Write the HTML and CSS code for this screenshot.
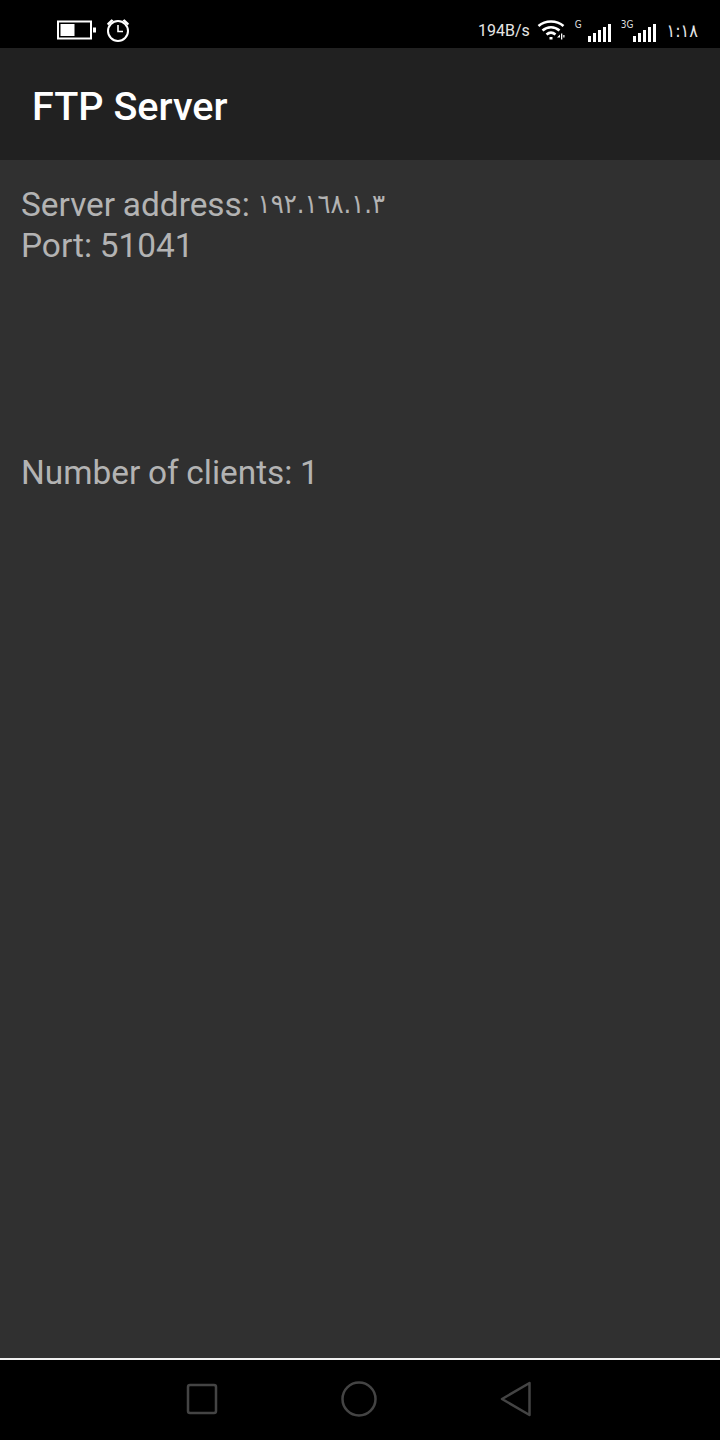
FILE: index.html
```html
<!DOCTYPE html>
<html lang="en">
  <head>
    <meta charset="UTF-8" />
    <meta name="viewport" content="width=device-width, initial-scale=1.0" />
    <title>FTP Server</title>
    <link rel="stylesheet" href="styles.css">
  </head>
  <body>
    <div class="screen">
      <div class="status-bar">
        <div class="status-left">
          <svg class="battery" width="40" height="20" viewBox="0 0 40 20">
            <rect x="1" y="1.5" width="33" height="17" fill="none" stroke="#fff" stroke-width="2" />
            <rect x="3.5" y="4" width="14" height="12" fill="#fff" />
            <rect x="36" y="7.5" width="3" height="5" fill="#fff" />
          </svg>
          <svg class="alarm" width="26" height="26" viewBox="0 0 26 26">
            <circle cx="13" cy="14" r="10" fill="none" stroke="#fff" stroke-width="2" />
            <path d="M13 8v6.5h5" fill="none" stroke="#fff" stroke-width="1.6" />
            <path d="M2 6.5L6.5 2.2L8.5 3.4L3.2 8.4Z M24 6.5L19.5 2.2L17.5 3.4L22.8 8.4Z" fill="#fff" />
          </svg>
        </div>
        <div class="status-right">
          <span class="speed">194B/s</span>
          <svg class="wifi" width="28" height="20" viewBox="0 0 28 20">
            <path d="M1.5 6C8.5 0 19.5 0 26.5 6" fill="none" stroke="#fff" stroke-width="2.6" />
            <path d="M5.5 10.5C10.5 6.2 17.5 6.2 22.5 10.5" fill="none" stroke="#fff" stroke-width="2.6" />
            <path d="M9.5 14.5C12.5 12 15.5 12 18.5 14.5" fill="none" stroke="#fff" stroke-width="2.6" />
            <rect x="12.5" y="17" width="3" height="2.5" fill="#fff" />
            <path d="M20 17.5L23 14.5V17.5Z M24 13.5h1.3v6H24Z M26.3 15h1.2v2.5h-1.2Z" fill="#fff" />
          </svg>
          <span class="net-label net-g">G</span>
          <svg class="signal" width="23" height="18" viewBox="0 0 23 18">
            <rect x="0" y="12" width="3" height="6" fill="#fff" />
            <rect x="5" y="9" width="3" height="9" fill="#fff" />
            <rect x="10" y="6" width="3" height="12" fill="#fff" />
            <rect x="15" y="3" width="3" height="15" fill="#fff" />
            <rect x="20" y="0" width="3" height="18" fill="#fff" />
          </svg>
          <span class="net-label net-3g">3G</span>
          <svg class="signal" width="23" height="18" viewBox="0 0 23 18">
            <rect x="0" y="12" width="3" height="6" fill="#fff" />
            <rect x="5" y="9" width="3" height="9" fill="#fff" />
            <rect x="10" y="6" width="3" height="12" fill="#fff" />
            <rect x="15" y="3" width="3" height="15" fill="#fff" />
            <rect x="20" y="0" width="3" height="18" fill="#fff" />
          </svg>
          <span class="time">١:١٨</span>
        </div>
      </div>

      <div class="app-bar">FTP Server</div>

      <div class="content">
        <div class="info-line">Server address: <span class="ip">١٩٢.١٦٨.١.٣</span></div>
        <div class="info-line">Port: 51041</div>
        <div class="info-line clients">Number of clients: 1</div>
      </div>

      <div class="nav-bar">
        <svg width="32" height="32" viewBox="0 0 32 32">
          <rect x="2" y="2" width="28" height="28" rx="2" fill="none" stroke="#444" stroke-width="2.5" />
        </svg>
        <svg width="36" height="36" viewBox="0 0 36 36">
          <circle cx="18" cy="18" r="16.5" fill="none" stroke="#444" stroke-width="2.5" />
        </svg>
        <svg width="32" height="36" viewBox="0 0 32 36">
          <path d="M29.5 2V34L2 18Z" fill="none" stroke="#444" stroke-width="2.5" stroke-linejoin="round" />
        </svg>
      </div>
    </div>
  </body>
</html>
```

FILE: styles.css
```css
body {
  margin: 0;
  background-color: #303030;
  font-family: Roboto, sans-serif;
}

.screen {
  width: 720px;
  height: 1440px;
  display: flex;
  flex-direction: column;
  overflow: hidden;
}

.status-bar {
  height: 48px;
  flex: none;
  background-color: #000;
  color: #fff;
  display: flex;
  align-items: center;
  justify-content: space-between;
  padding: 12px 22px 0 57px;
  box-sizing: border-box;
}

.status-left {
  display: flex;
  align-items: center;
  gap: 8px;
}

.status-right {
  display: flex;
  align-items: center;
}

.speed {
  font-size: 16px;
  color: #e6e6e6;
  margin-right: 7px;
}

.wifi {
  margin-right: 10px;
}

.net-label {
  font-family: "DejaVu Sans Condensed", "DejaVu Sans", sans-serif;
  font-size: 10px;
  line-height: 10px;
  align-self: flex-start;
  margin-top: 2px;
  color: #ddd;
}

.net-g {
  margin-right: 6px;
}

.net-3g {
  margin-left: 10px;
}

.signal {
  margin-top: 6px;
}

.time {
  font-family: "DejaVu Sans Condensed", "DejaVu Sans", sans-serif;
  font-size: 18px;
  letter-spacing: -1.5px;
  color: #e6e6e6;
  margin-left: 10px;
}

.app-bar {
  height: 112px;
  flex: none;
  background-color: #212121;
  color: #fff;
  font-size: 39.6px;
  font-weight: 500;
  display: flex;
  align-items: center;
  padding: 4px 0 0 32px;
  box-sizing: border-box;
}

.content {
  flex: 1;
  background-color: #303030;
  padding: 24px 21px 0;
  color: #b3b3b3;
  font-size: 33.4px;
  word-spacing: -0.6px;
}

.info-line {
  line-height: 41px;
}

.ip {
  font-family: "DejaVu Sans Condensed", "DejaVu Sans", sans-serif;
  font-size: 27px;
  line-height: 0;
  letter-spacing: -1.1px;
  vertical-align: 3px;
}

.clients {
  margin-top: 186px;
}

.nav-bar {
  height: 82px;
  flex: none;
  background-color: #000;
  border-top: 2px solid #f0f0f0;
  box-sizing: border-box;
  display: flex;
  align-items: center;
  justify-content: center;
  gap: 123px;
  padding: 0 2px 2px 0;
}
```
